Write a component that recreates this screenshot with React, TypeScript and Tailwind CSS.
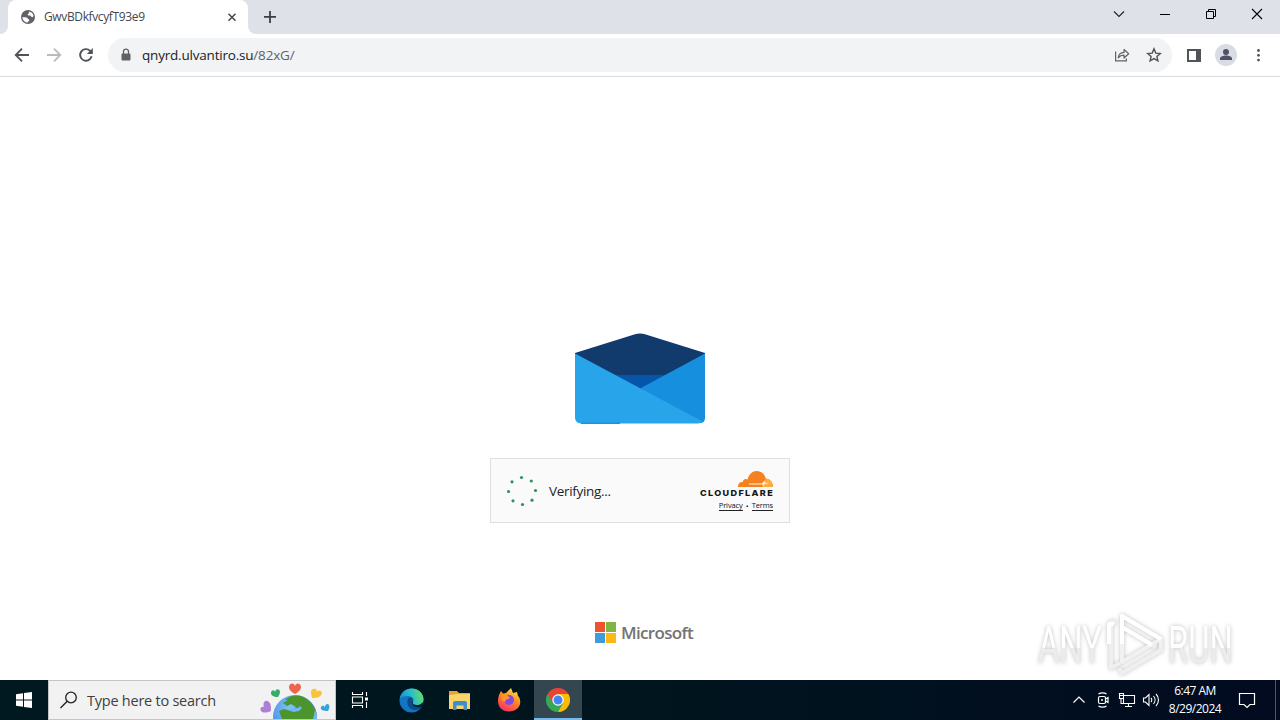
import type { ReactNode } from 'react';

const uiFont = "font-['Open_Sans','Noto_Sans',sans-serif]";

function Globe() {
  return (
    <svg className="w-4 h-4 shrink-0" viewBox="0 0 16 16">
      <circle cx="8" cy="8" r="7" fill="#5f6368" />
      <path d="M2.3 8.2h3.2c1.5 0 1.8.9 2.6 1.7.7.6 1.4.6 1.2 1.5-.2.8-1.4.8-1.5 2.1A5.6 5.6 0 0 1 2.3 8.2Z" fill="#fff" />
      <path d="M8.6 2.4a5.6 5.6 0 0 1 4.9 4.3c-.2 1.2-1 1.7-1.9 1.3-.8-.4-.4-1.3-1.5-1.4-1 0-2.4.2-2.4-1 0-1.3 1.6-1 1.6-1.9 0-.6-.5-.7-.7-1.3Z" fill="#fff" />
    </svg>
  );
}

function TitleBar() {
  return (
    <div className="h-[34px] flex bg-[#dee1e8] shrink-0">
      <svg className="w-2 h-[34px] shrink-0" viewBox="0 0 8 34">
        <path d="M8 26a8 8 0 0 1-8 8h8Z" fill="#fff" />
      </svg>
      <div className="w-60 h-[34px] bg-white rounded-t-lg flex items-center pl-3 pr-2">
        <Globe />
        <span className="ml-2 text-[12px] leading-4 text-[#45484d] tracking-[-0.37px] flex-1 whitespace-nowrap">GwvBDkfvcyfT93e9</span>
        <svg className="w-4 h-4" viewBox="0 0 16 16" stroke="#45484d" strokeWidth="1.5">
          <path d="M4.5 4.7l7 7M11.5 4.7l-7 7" />
        </svg>
      </div>
      <svg className="w-2 h-[34px] shrink-0" viewBox="0 0 8 34">
        <path d="M0 26a8 8 0 0 0 8 8H0Z" fill="#fff" />
      </svg>
      <svg className="w-7 h-[34px] shrink-0" viewBox="0 0 28 34" stroke="#3c4043" strokeWidth="1.8">
        <path d="M8 16.9h12M14 11v12" />
      </svg>
      <div className="flex-1" />
      <svg className="w-[46px] h-[34px]" viewBox="0 0 46 34" fill="none" stroke="#202124" strokeWidth="1.1">
        <path d="M18 11.5l5 5 5-5" />
      </svg>
      <svg className="w-[46px] h-[34px]" viewBox="0 0 46 34" stroke="#000">
        <path d="M18 14.5h10" />
      </svg>
      <svg className="w-[46px] h-[34px]" viewBox="0 0 46 34" fill="none" stroke="#000">
        <path d="M18.5 11.5h7v7h-7zM20.5 11.5v-2h7v7h-2" />
      </svg>
      <svg className="w-[46px] h-[34px]" viewBox="0 0 46 34" stroke="#000" strokeWidth="1.1">
        <path d="M18 9l10 10M28 9l-10 10" />
      </svg>
    </div>
  );
}

function Toolbar() {
  return (
    <div className="h-[43px] shrink-0 flex items-center border-b border-[#dadce0] bg-white pl-3 pr-[11px] gap-3">
      <svg className="w-5 h-5" viewBox="0 0 20 20" fill="none" stroke="#505357" strokeWidth="1.8">
        <path d="M17 10H4M10 3.7L3.7 10l6.3 6.3" />
      </svg>
      <svg className="w-5 h-5" viewBox="0 0 20 20" fill="none" stroke="#b9bbbe" strokeWidth="1.8">
        <path d="M3 10h13M10 3.7l6.3 6.3-6.3 6.3" />
      </svg>
      <svg className="w-5 h-5" viewBox="0 0 20 20" fill="none" stroke="#505357" strokeWidth="1.9">
        <path d="M15.6 11.2A5.8 5.8 0 1 1 14.1 5.9L16 7.8" />
        <path d="M16.8 3v6h-6z" fill="#505357" stroke="none" />
      </svg>
      <div className="flex-1 h-[34px] rounded-full bg-[#f1f3f4] flex items-center pl-2.5 pr-2.5">
        <svg className="w-4 h-4" viewBox="0 0 16 16">
          <rect x="3.5" y="6.5" width="9" height="7" rx="1" fill="#5f6368" />
          <path d="M5.5 7V4.6a2.5 2.5 0 0 1 5 0V7" fill="none" stroke="#5f6368" strokeWidth="1.3" />
        </svg>
        <span className="ml-2 text-[13.5px] leading-5 text-[#202124] tracking-[-0.2px] flex-1 whitespace-nowrap">
          qnyrd.ulvantiro.su<span className="text-[#5f6368]">/82xG/</span>
        </span>
        <svg className="w-4 h-4" viewBox="0 0 16 16" fill="none" stroke="#5f6368" strokeWidth="1.2">
          <path d="M1.6 4.5v9.4h10.8v-2.5" />
          <path d="M4.3 10.8c.3-3.5 2.2-5.2 5.7-5.4V2.5l4.7 4.3-4.7 4.2V8.2c-2.6 0-4.3.8-5.7 2.6Z" strokeLinejoin="round" />
        </svg>
        <svg className="w-4 h-4 ml-4" viewBox="0 0 16 16" fill="none" stroke="#505357" strokeWidth="1.4">
          <path d="M8 1.9l1.8 4.2 4.5.4-3.4 3 1 4.4L8 11.6l-3.9 2.3 1-4.4-3.4-3 4.5-.4Z" />
        </svg>
      </div>
      <svg className="w-5 h-5" viewBox="0 0 20 20">
        <path d="M3 4h14v13H3zM5 6v9h7V6z" fill="#505357" fillRule="evenodd" />
      </svg>
      <svg className="w-[22px] h-[22px] -ml-px" viewBox="0 0 22 22">
        <circle cx="11" cy="11" r="11" fill="#dadce4" />
        <circle cx="11" cy="8" r="3" fill="#4c5163" />
        <path d="M5 16v-1.5c0-2 3.3-3 6-3s6 1 6 3V16Z" fill="#4c5163" />
      </svg>
      <svg className="w-5 h-5" viewBox="0 0 20 20" fill="#505357">
        <circle cx="9.5" cy="5.5" r="1.4" />
        <circle cx="9.5" cy="10.3" r="1.4" />
        <circle cx="9.5" cy="15.1" r="1.4" />
      </svg>
    </div>
  );
}

function Envelope() {
  return (
    <svg className="w-[130px] h-[92px]" viewBox="0 0 130 92">
      <path d="M0 20L60 1.3Q65-.4 70 1.3L130 20v3L65 60 0 23Z" fill="#123b6d" />
      <path d="M39 42h52L65 56Z" fill="#0555a8" />
      <path d="M130 20.5V85q0 5-5 5L65 55.5Z" fill="#178fdf" />
      <path d="M0 20.5L127.5 88.5Q126 90.5 123 90.5H7q-7 0-7-6Z" fill="#28a5ea" />
      <path d="M6 90.3h39" stroke="#0f6fb5" strokeWidth=".9" />
    </svg>
  );
}

const dots = [
  [15.5, 2.5], [25.3, 6], [29.5, 15.5], [26, 25.2],
  [16.5, 29.5], [7, 25.8], [2.5, 16.5], [6, 6.8],
];

function VerifyBox() {
  return (
    <div className="mt-[33px] w-[300px] h-[65px] border border-[#e0e0e0] bg-[#fafafa] flex items-center justify-between pl-[15px] pr-4">
      <div className="flex items-center">
        <svg className="w-8 h-8" viewBox="0 0 32 32" fill="#2e9160">
          {dots.map(([x, y]) => (
            <circle key={`${x}-${y}`} cx={x} cy={y} r="1.6" />
          ))}
        </svg>
        <span className="ml-[11px] mt-px text-[13.5px] leading-5 text-[#232323] tracking-[-0.32px]">Verifying...</span>
      </div>
      <div className="flex flex-col items-end">
        <svg className="w-[75px] h-[27px] -mr-px" viewBox="0 0 75 27">
          <path d="M39 17c-.2-3.6 2-5.5 5-5-.5-2.5 2.5-4 4.5-2.5C50 4 53.5 1 57.5 1c4.7 0 8.3 3 9.2 7.5 4 0 7.3 3.7 7.3 8.5Z" fill="#f58220" />
          <path d="M66.5 8.7c4.5-.2 7.5 3.3 7.5 8.3H63l2-4.5Z" fill="#fbad41" />
          <path d="M50 13.500h13l2.500-3 .5 2.200 4.500.3-5 1-.7 2-1.300-1.500H50Z" fill="#fff3e3" />
          <text x="1" y="26" textLength="74" lengthAdjust="spacingAndGlyphs" className="font-['Inter',sans-serif] font-extrabold text-[8.2px]" letterSpacing="1.200" fill="#161616">CLOUDFLARE</text>
        </svg>
        <div className="flex items-center mt-1 text-[7.5px] leading-[9px] text-[#111] tracking-[-0.12px]">
          <span className="border-b border-[#232323]">Privacy</span>
          <span className="w-[9px] text-center">•</span>
          <span className="border-b border-[#232323]">Terms</span>
        </div>
      </div>
    </div>
  );
}

function Microsoft() {
  return (
    <div className="mt-[99px] ml-2 flex items-start w-[98px] h-6">
      <svg className="w-[21px] h-[21px] shrink-0" viewBox="0 0 21 21">
        <path d="M0 0h10v10H0z" fill="#ee5330" />
        <path d="M11 0h10v10H11z" fill="#7fb642" />
        <path d="M0 11h10v10H0z" fill="#3f9bdb" />
        <path d="M11 11h10v10H11z" fill="#fcb813" />
      </svg>
      <span className="ml-[5px] -mt-px text-[17px] leading-6 font-semibold tracking-[-0.68px] text-[#737373]">Microsoft</span>
    </div>
  );
}

function Watermark() {
  return (
    <div className="absolute left-[1038px] top-[606px] flex items-center drop-shadow-[0_0_2px_rgba(0,0,0,0.25)] font-['Roboto',sans-serif] text-[52px] leading-[70px]">
      <div className="w-[66px] pt-[5px] whitespace-nowrap">
        <span className="inline-block origin-left scale-x-[0.63] bg-linear-to-b from-white from-52% to-[#ececec] to-53% bg-clip-text text-transparent">ANY</span>
      </div>
      <svg className="w-[62px] h-[72px] -mt-1" viewBox="75 0 62 72" fill="none" strokeWidth="4" strokeLinejoin="round">
        <path d="M93 10v46l39-23Z" stroke="#f1f1f1" />
        <path d="M87 16h-5v46l9-5M90 62l3 5 39-23v-9M93 21l34 20" stroke="#efefef" />
        <path d="M93 38V10l39 23M93 21l30 18M80 38V18h5" stroke="#fff" />
      </svg>
      <div className="w-[68px] pt-[5px] whitespace-nowrap">
        <span className="inline-block origin-left scale-x-[0.63] ml-0.5 bg-linear-to-b from-white from-52% to-[#ececec] to-53% bg-clip-text text-transparent">RUN</span>
      </div>
    </div>
  );
}

function SearchArt() {
  return (
    <svg className="w-[74px] h-[38px]" viewBox="0 0 74 38">
      <defs>
        <radialGradient id="sea" cx=".4" cy=".3" r=".7">
          <stop offset="0" stopColor="#7cc6f5" />
          <stop offset="1" stopColor="#3f7ce0" />
        </radialGradient>
      </defs>
      <circle cx="35" cy="36" r="22" fill="url(#sea)" />
      <path d="M25 19c7-6 17-6 24 1 5 4 7 10 8 18H22l-3-8 5-2 7 2 5-4-5-3-4 2-4-3 5-3Z" fill="#4c952d" />
      <path d="M30 27h8l2-2 2 2-3 3-6 1-4-2ZM55 29l2 6v3h-4Z" fill="#70b8ef" />
      <path d="M35 13c-5-3-6-5-6-7 0-4 5-5 6-1 1-4 6-3 6 1 0 2-1 4-6 7Z" fill="#ee644c" />
      <path d="M18 16c-5 0-7-2-7-4 0-4 4-3 4-1 1-4 5-3 5 0 0 2-1 3-2 5Z" fill="#36ad69" />
      <path d="M52 17c-1-5-2-8 1-9 3-1 4 1 4 3 2-3 5-1 5 1-1 4-4 5-10 5Z" fill="#f8c43a" />
      <path d="M11 30c-5 2-8 2-10 0-2-3 1-5 3-4-2-5 2-8 5-5 2 2 2 4 2 9Z" fill="#ad80d6" />
      <path d="M68 30c-5 0-8-1-7-4 1-2 3-1 4 0 0-3 3-4 4-2 1 2 0 4-1 6Z" fill="#36a3dc" />
    </svg>
  );
}

function Slot({ children, active = false }: { children: ReactNode; active?: boolean }) {
  return (
    <div className={active ? 'w-12 h-10 ml-px flex items-center justify-center bg-[#34464f] border-b-2 border-[#76b9ed] pt-0.5' : 'w-12 h-10 ml-px flex items-center justify-center'}>
      {children}
    </div>
  );
}

function TaskIcons() {
  return (
    <div className="flex -ml-px">
      <Slot>
        <svg className="w-5 h-5" viewBox="0 0 20 20" fill="none" stroke="#fff" strokeWidth="1.1">
          <path d="M2.5 2v2.5h10V2M2.5 7h10v6h-10zM2.5 18v-2.5h10V18M16.5 2v4M16.5 12v6" />
          <path d="M15 7.5h3v3h-3z" fill="#fff" stroke="none" />
        </svg>
      </Slot>
      <div className="w-[2px]" />
      <Slot>
        <svg className="w-[25px] h-[25px]" viewBox="0 0 25 25">
          <defs>
            <linearGradient id="edge" x1="0" y1=".5" x2="1" y2=".3">
              <stop offset="0" stopColor="#168fd6" />
              <stop offset=".5" stopColor="#28bfc9" />
              <stop offset="1" stopColor="#6bdd60" />
            </linearGradient>
          </defs>
          <circle cx="12.5" cy="12.5" r="12" fill="#1274c5" />
          <path d="M.7 11C2 4 7 .5 12.5.5c7 0 12 5 12 10.5 0 4-3 6-6.5 6-3 0-5-1-4-2.5C16 11 13 8 9 8c-4 0-7 1-8.3 3Z" fill="url(#edge)" />
          <path d="M9 10.5C7 16 10 22 16 22c3 0 6-1.5 7.5-3-4.5 2-9.5 0-10.5-4-.4-2 .8-2 .8-3.5 0-2-3-3-4.8-1Z" fill="#0b4b86" />
          <path d="M14 14.5c-1 1.5 1 2.5 4 2.5 2 0 4-.5 5.5-2.5l1.5 1-1.5 3.5c-4 1.5-9.5.5-10.5-4 0-1 .5-1.5 1-2Z" fill="#06202b" />
        </svg>
      </Slot>
      <Slot>
        <svg className="w-6 h-6" viewBox="0 0 24 24">
          <path d="M1 3h8l2 2h11v4H1Z" fill="#e8a52f" />
          <path d="M1 7l9-1h12v15H1Z" fill="#fcd46c" />
          <path d="M5 22v-7q0-2 2-2h10q2 0 2 2v7h-3.5v-4.5h-7V22Z" fill="#3d8fc8" />
        </svg>
      </Slot>
      <Slot>
        <svg className="w-6 h-6" viewBox="0 0 24 24">
          <defs>
            <linearGradient id="fox" x1=".8" y1="0" x2=".3" y2="1">
              <stop offset="0" stopColor="#fff04a" />
              <stop offset=".45" stopColor="#ff8b23" />
              <stop offset="1" stopColor="#f92f65" />
            </linearGradient>
          </defs>
          <path d="M2 7l2-4 2 2.5 3-.5 5-5 2 5 4-1 1 4 1 1c4 8-2 14.5-10 14.5C3 23.5-1 16 2 7Z" fill="url(#fox)" />
          <circle cx="12" cy="12" r="5" fill="#8049e5" />
          <path d="M4 7c3-1 6-1 8 2l1 1-3 1.500c-2 0-2 1-1 2-3 1-5-2-5-6.500Z" fill="#ff9526" />
        </svg>
      </Slot>
      <Slot active>
        <svg className="w-6 h-6" viewBox="0 0 24 24">
          <path d="M12 12V6h10.4A12 12 0 0 1 12 24Z" fill="#fbbc05" />
          <path d="M1.6 6L12 12l5.2 3L12 24A12 12 0 0 1 1.6 6Z" fill="#34a853" />
          <path d="M1.6 6A12 12 0 0 1 22.4 6H12L7 15Z" fill="#e94335" />
          <circle cx="12" cy="12" r="5.7" fill="#fff" />
          <circle cx="12" cy="12" r="4.5" fill="#4285f4" />
        </svg>
      </Slot>
    </div>
  );
}

function Tray() {
  return (
    <div className="flex items-center h-full text-white">
      <svg className="w-6 h-6" viewBox="0 0 24 24" fill="none" stroke="#fff" strokeWidth="1.2">
        <path d="M6.5 14.5L12 9l5.5 5.5" />
      </svg>
      <svg className="w-6 h-6" viewBox="0 0 24 24" fill="none" stroke="#fff" strokeWidth="1.2">
        <rect x="7.5" y="8.5" width="7" height="7" rx="1.5" />
        <path d="M14.5 11l2.5-1.5v5L14.5 13M7.5 6c2-1.5 6-1.5 8 0M7.5 18c2 1.5 6 1.5 8 0" />
        <circle cx="11" cy="12" r=".4" />
      </svg>
      <svg className="w-6 h-6" viewBox="0 0 24 24" fill="none" stroke="#fff" strokeWidth="1.1">
        <path d="M9 7.5h10.5v8H8.5v-5M13.5 15.5v3M10 18.5h7M6 10.5v5h2.5" />
        <path d="M4.5 5.5h4v5h-4zM4.5 7.5h4" />
      </svg>
      <svg className="w-6 h-6" viewBox="0 0 24 24" fill="none" stroke="#fff" strokeWidth="1.1">
        <path d="M4.5 10h2l3.5-3.5v11L6.5 14h-2zM12 10c1 1 1 3 0 4M14.5 8c2 2.3 2 5.7 0 8M17 6c3.3 3.3 3.3 8.7 0 12" />
      </svg>
      <div className="w-16 flex flex-col items-center text-[12px] leading-[18px] tracking-[-0.5px] whitespace-nowrap">
        <span>6:47 AM</span>
        <span>8/29/2024</span>
      </div>
      <svg className="w-6 h-6 ml-2" viewBox="0 0 24 24" fill="none" stroke="#fff" strokeWidth="1.2">
        <path d="M4.5 5.5h15v11H15L12 19.5 9 16.5H4.5Z" />
      </svg>
      <div className="w-[5px] h-full ml-4 border-l border-[#4c5865]" />
    </div>
  );
}

function Taskbar() {
  return (
    <div className="h-10 shrink-0 flex items-center bg-linear-to-r from-[#001820] via-[#00151e] to-[#020b20]">
      <div className="w-12 flex justify-center">
        <svg className="w-4 h-4" viewBox="0 0 16 16" fill="#fff">
          <path d="M0 2.2l7-1v6.3H0zM8 1.1L16 0v7.5H8zM0 8.5h7v6.3l-7-1zM8 8.5h8V16l-8-1.1z" />
        </svg>
      </div>
      <div className="w-72 h-10 bg-[#f2f2f2] border border-[#c3c5c6] flex items-center pl-2.5 pr-px">
        <svg className="w-5 h-5" viewBox="0 0 20 20" fill="none" stroke="#222" strokeWidth="1.3">
          <circle cx="12" cy="7.5" r="5.3" />
          <path d="M8.2 11.3L1.5 18" />
        </svg>
        <span className="ml-2 mt-0.5 text-[14.5px] leading-5 text-[#404040] tracking-[-0.24px] flex-1 whitespace-nowrap">Type here to search</span>
        <SearchArt />
      </div>
      <TaskIcons />
      <div className="flex-1" />
      <Tray />
    </div>
  );
}

export default function App() {
  return (
    <div className={`relative w-[1280px] h-[720px] overflow-hidden flex flex-col bg-white ${uiFont}`}>
      <TitleBar />
      <Toolbar />
      <main className="flex-1 flex flex-col items-center pt-[256px]">
        <Envelope />
        <VerifyBox />
        <Microsoft />
      </main>
      <Taskbar />
      <Watermark />
    </div>
  );
}
